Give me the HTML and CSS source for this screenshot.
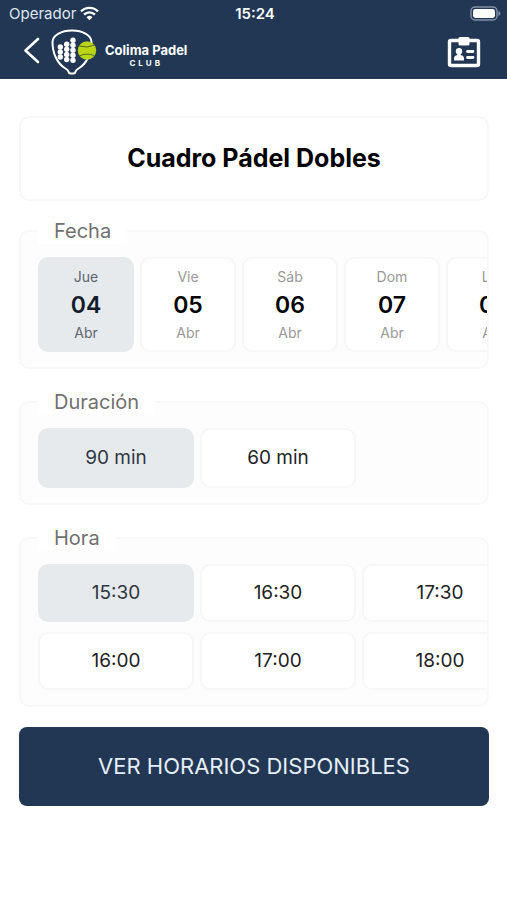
FILE: index.html
```html
<!DOCTYPE html>
<html lang="es">
<head>
    <meta charset="UTF-8">
    <meta name="viewport" content="width=device-width, initial-scale=1.0">
    <title>Colima Padel Club</title>
    <link rel="stylesheet" href="styles.css">
</head>
<body>
    <header class="header">
        <div class="status">
            <div class="operator">
                <span>Operador</span>
                <svg width="19" height="15" viewBox="0 0 19 15" fill="none" stroke="#fff" stroke-width="2.4">
                    <path d="M1 5.4a12 12 0 0 1 17 0M4.1 8.6a7.6 7.6 0 0 1 10.8 0"/>
                    <path d="M9.5 14.2 6.5 11.2a4.3 4.3 0 0 1 6 0z" fill="#fff" stroke="none"/>
                </svg>
            </div>
            <span class="clock">15:24</span>
            <svg class="battery" width="31" height="15" viewBox="0 0 31 15">
                <rect x="1" y="1" width="26" height="13" rx="4" fill="none" stroke="#8391a6" stroke-width="1.4"/>
                <rect x="3" y="3" width="22" height="9" rx="2.4" fill="#fff"/>
                <path d="M28.4 5v5q2-.8 2-2.5t-2-2.5z" fill="#8391a6"/>
            </svg>
        </div>
        <div class="navbar">
            <button class="icon-btn" type="button" aria-label="Volver">
                <svg width="18" height="30" viewBox="0 0 18 30" fill="none" stroke="#fff" stroke-width="2.6" stroke-linecap="round" stroke-linejoin="round">
                    <path d="M15 2 2.500 13.500 15 25"/>
                </svg>
            </button>
            <div class="logo">
                <!-- raqueta con pelota -->
                <svg width="46" height="47" viewBox="0 0 46 47">
                    <path d="M21 1.500C10 1.500 1.500 6.500 1.500 13 1.500 24 6 34.500 14.500 39.500q2.500 1.500 3 3.200c.3 1.300 1 1.800 2 1.800h3c1 0 1.700-.5 2-1.800q.5-1.700 3-3.200C36 34.500 40.500 24 40.500 13 40.500 6.500 32 1.500 21 1.500z" fill="none" stroke="#fff" stroke-width="2"/>
                    <g fill="#fff">
                        <circle cx="9.300" cy="18" r="2.700"/><circle cx="9.300" cy="23" r="2.700"/><circle cx="9.300" cy="28" r="2.700"/>
                        <circle cx="15.700" cy="15.200" r="2.700"/><circle cx="15.700" cy="20.300" r="2.700"/><circle cx="15.700" cy="25.400" r="2.700"/><circle cx="15.700" cy="30.500" r="2.700"/>
                        <circle cx="22" cy="11.300" r="2.700"/><circle cx="22" cy="16.300" r="2.700"/><circle cx="22" cy="21.300" r="2.700"/><circle cx="22" cy="26.300" r="2.700"/><circle cx="22" cy="31.300" r="2.700"/>
                    </g>
                    <circle cx="36" cy="21.500" r="9.200" fill="#b9d514"/>
                    <path d="M28.300 17q8 2.500 15.200-1M28.300 27q7-3.500 15-.5" fill="none" stroke="#4f6b2c" stroke-width="1"/>
                </svg>
                <div class="logo-text">
                    <span class="logo-name">Colima Padel</span>
                    <span class="logo-club">CLUB</span>
                </div>
            </div>
            <button class="icon-btn badge-btn" type="button" aria-label="Mi credencial">
                <svg width="34" height="32" viewBox="0 0 34 32">
                    <rect x="2.500" y="4.500" width="29" height="25" rx="1.500" fill="none" stroke="#fff" stroke-width="3.400"/>
                    <rect x="11.500" y="1" width="11" height="8.500" rx="1.500" fill="#fff"/>
                    <circle cx="12" cy="15.200" r="3.200" fill="#fff"/>
                    <path d="M10.300 17h3.400v2q3.300.6 3.300 3.500v2H7v-2q0-2.900 3.300-3.500z" fill="#fff"/>
                    <path d="M20.500 15.500h5.500M20.500 21.500h5.500" stroke="#fff" stroke-width="2.800" stroke-linecap="round"/>
                </svg>
            </button>
        </div>
    </header>

    <main>
        <form class="reserva">
            <h1 class="title">Cuadro Pádel Dobles</h1>

            <fieldset class="group">
                <legend>Fecha</legend>
                <div class="scroll dates">
                    <label class="option date"><input type="radio" name="fecha" value="04" checked><span>Jue</span><b>04</b><span>Abr</span></label>
                    <label class="option date"><input type="radio" name="fecha" value="05"><span>Vie</span><b>05</b><span>Abr</span></label>
                    <label class="option date"><input type="radio" name="fecha" value="06"><span>Sáb</span><b>06</b><span>Abr</span></label>
                    <label class="option date"><input type="radio" name="fecha" value="07"><span>Dom</span><b>07</b><span>Abr</span></label>
                    <label class="option date"><input type="radio" name="fecha" value="08"><span>Lun</span><b>08</b><span>Abr</span></label>
                </div>
            </fieldset>

            <fieldset class="group">
                <legend>Duración</legend>
                <div class="scroll durations">
                    <label class="option"><input type="radio" name="duracion" value="90" checked>90 min</label>
                    <label class="option"><input type="radio" name="duracion" value="60">60 min</label>
                </div>
            </fieldset>

            <fieldset class="group">
                <legend>Hora</legend>
                <div class="scroll hours">
                    <label class="option"><input type="radio" name="hora" value="15:30" checked>15:30</label>
                    <label class="option"><input type="radio" name="hora" value="16:00">16:00</label>
                    <label class="option"><input type="radio" name="hora" value="16:30">16:30</label>
                    <label class="option"><input type="radio" name="hora" value="17:00">17:00</label>
                    <label class="option"><input type="radio" name="hora" value="17:30">17:30</label>
                    <label class="option"><input type="radio" name="hora" value="18:00">18:00</label>
                </div>
            </fieldset>

            <button class="submit" type="button">VER HORARIOS DISPONIBLES</button>
        </form>
    </main>
</body>
</html>
```
FILE: styles.css
```css
*{
    margin: 0;
    padding: 0;
    box-sizing: border-box;
}

body{
    background: #fff;
    color: #000;
    font-family: Inter, "Liberation Sans", sans-serif;
}

button{
    border: none;
    font-family: inherit;
    cursor: pointer;
}

svg{
    display: block;
}

.header{
    background: #213754;
    color: #fff;
}

/* barra de estado */
.status{
    display: grid;
    grid-template-columns: 1fr auto 1fr;
    align-items: center;
    height: 27px;
    padding: 0 6px 0 9px;
    font-size: 15px;
}

.operator{
    display: flex;
    align-items: center;
    gap: 4px;
    color: #dfe6ef;
}

.clock{
    font-weight: 600;
}

.battery{
    justify-self: end;
}

.navbar{
    display: flex;
    align-items: center;
    height: 52px;
    padding: 0 26px 2px 23px;
}

.icon-btn{
    background: none;
}

.badge-btn{
    margin-left: auto;
}

.logo{
    display: flex;
    align-items: center;
    gap: 8px;
    margin-left: 10px;
}

.logo-text{
    display: flex;
    flex-direction: column;
    align-items: center;
    padding-top: 6px;
}

.logo-name{
    font-size: 13px;
    font-weight: 700;
    line-height: 16px;
}

.logo-club{
    font-size: 8px;
    font-weight: 700;
    line-height: 10px;
    letter-spacing: 3px;
}

/* formulario */
.reserva{
    padding: 37px 18px 20px 19px;
}

.title{
    margin-bottom: 17px;
    padding: 26px 10px 27px;
    border: 2px solid #f7f7f7;
    border-radius: 10px;
    font-size: 25px;
    font-weight: 700;
    line-height: 28px;
    text-align: center;
}

.group{
    min-width: 0;
    margin-bottom: 20px;
    padding: 13px 0 15px;
    border: 2px solid #f8f8f8;
    border-radius: 10px;
    background: #fdfdfd;
}

.group legend{
    margin-left: 17px;
    padding: 0 16px;
    background: #fff;
    color: #707070;
    font-size: 20px;
    line-height: 26px;
}

.scroll{
    display: flex;
    gap: 6px;
    padding-left: 17px;
    overflow-x: auto;
    scrollbar-width: none;
}

.option{
    position: relative;
    display: flex;
    flex: none;
    align-items: center;
    justify-content: center;
    width: 156px;
    height: 58px;
    padding-bottom: 2px;
    border: 2px solid #f7f7f7;
    border-radius: 10px;
    background: #fff;
    color: #222;
    font-size: 19px;
    cursor: pointer;
}

.option input{
    position: absolute;
    opacity: 0;
}

.option:has(input:checked){
    border-color: #e7eaed;
    background: #e7eaed;
    color: #2f3742;
}

.durations .option{
    height: 60px;
}

.hours{
    display: grid;
    grid-template-rows: repeat(2, 58px);
    grid-auto-flow: column;
    justify-content: start;
    row-gap: 10px;
}

.date{
    flex-direction: column;
    gap: 4px;
    width: 96px;
    height: 95px;
    padding-bottom: 0;
    color: #999;
    font-size: 14px;
    line-height: 18px;
}

.date b{
    color: #000;
    font-size: 23px;
    font-weight: 600;
    line-height: 30px;
}

.date:has(input:checked){
    color: #5f6670;
}

.date:has(input:checked) b{
    color: #131c2b;
}

.submit{
    display: block;
    width: 100%;
    height: 79px;
    padding-bottom: 2px;
    border-radius: 8px;
    background: #213754;
    color: #e6eef7;
    font-size: 22px;
}
```
